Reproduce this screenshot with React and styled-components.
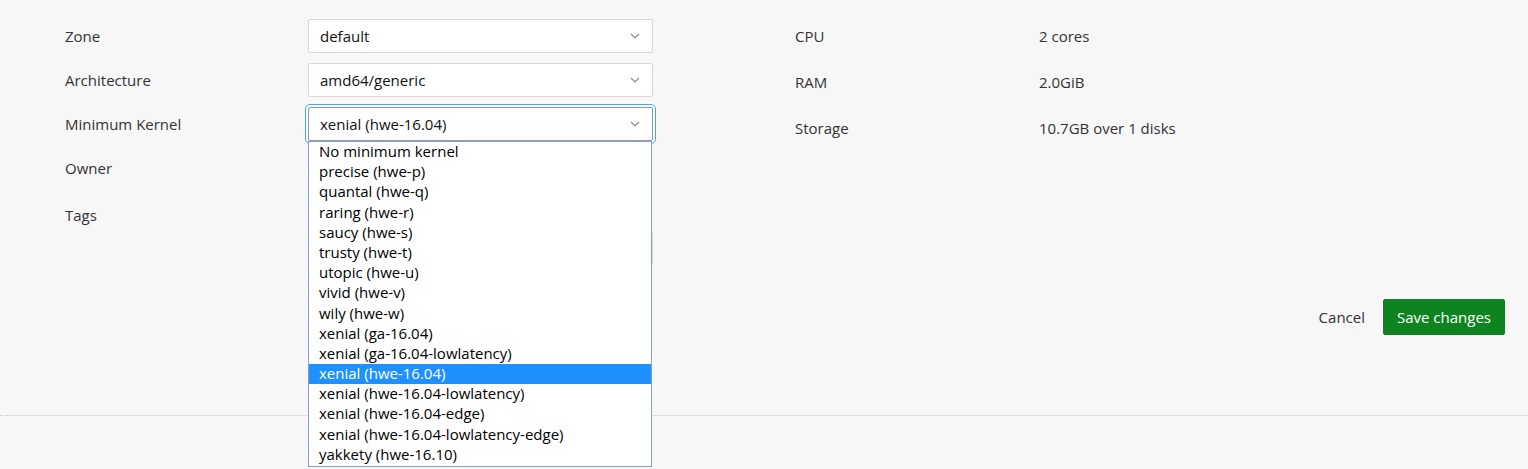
import React from "react";
import styled, { createGlobalStyle } from "styled-components";

const GlobalStyle = createGlobalStyle`
  body {
    margin: 0;
    background: #f7f7f7;
    font-family: "Open Sans", "Noto Sans", sans-serif;
    color: #111;
  }
`;

const KERNELS = [
  "No minimum kernel",
  "precise (hwe-p)",
  "quantal (hwe-q)",
  "raring (hwe-r)",
  "saucy (hwe-s)",
  "trusty (hwe-t)",
  "utopic (hwe-u)",
  "vivid (hwe-v)",
  "wily (hwe-w)",
  "xenial (ga-16.04)",
  "xenial (ga-16.04-lowlatency)",
  "xenial (hwe-16.04)",
  "xenial (hwe-16.04-lowlatency)",
  "xenial (hwe-16.04-edge)",
  "xenial (hwe-16.04-lowlatency-edge)",
  "yakkety (hwe-16.10)",
];

const SELECTED = "xenial (hwe-16.04)";

const Chevron = () => (
  <ChevronIcon width="10" height="6" viewBox="0 0 10 6">
    <path d="M1 1l4 4 4-4" fill="none" stroke="#888" strokeWidth="1.2" />
  </ChevronIcon>
);

const Select = ({ value, focused, children }) => (
  <SelectWrap>
    <SelectBox $focused={focused}>
      {value}
      <Chevron />
    </SelectBox>
    {children}
  </SelectWrap>
);

const App = () => (
  <>
    <GlobalStyle />
    <Page>
      <Form>
        <FieldGrid>
          <Label>Zone</Label>
          <Select value="default" />
          <Label>Architecture</Label>
          <Select value="amd64/generic" />
          <Label>Minimum Kernel</Label>
          <Select value={SELECTED} focused>
            <Dropdown>
              {KERNELS.map((k) => (
                <Option key={k} $active={k === SELECTED}>
                  {k}
                </Option>
              ))}
            </Dropdown>
          </Select>
          <Label>Owner</Label>
          <OwnerField />
          <Label $tall>Tags</Label>
          <TagsField>
            <TagList />
            <TagInput />
          </TagsField>
        </FieldGrid>

        <InfoGrid>
          <Label>CPU</Label>
          <Value>2 cores</Value>
          <Label>RAM</Label>
          <Value>2.0GiB</Value>
          <Label>Storage</Label>
          <Value>10.7GB over 1 disks</Value>
        </InfoGrid>
      </Form>

      <Actions>
        <CancelButton>Cancel</CancelButton>
        <SaveButton>Save changes</SaveButton>
      </Actions>

      <Divider />
    </Page>
  </>
);

const Page = styled.div`
  padding: 19px 23px 0 65px;
  height: 469px;
  box-sizing: border-box;
`;

const Form = styled.div`
  display: flex;
  gap: 142px;
`;

const FieldGrid = styled.div`
  display: grid;
  grid-template-columns: 243px 345px;
  grid-auto-rows: 34px;
  row-gap: 10px;
  align-items: center;
`;

const InfoGrid = styled.div`
  display: grid;
  grid-template-columns: 244px auto;
  grid-auto-rows: 36px;
  row-gap: 10px;
  align-items: center;
  margin-top: -1px;
`;

const Label = styled.div`
  font-size: 15px;
  color: #333;
  align-self: ${(p) => (p.$tall ? "start" : "center")};
  padding-top: ${(p) => (p.$tall ? "10px" : "0")};
`;

const Value = styled(Label)`
  color: #333;
`;

const SelectWrap = styled.div`
  position: relative;
  height: 34px;
`;

const SelectBox = styled.div`
  box-sizing: border-box;
  height: 34px;
  padding: 0 12px 0 11px;
  display: flex;
  align-items: center;
  justify-content: space-between;
  background: #fff;
  border: 1px solid ${(p) => (p.$focused ? "#999" : "#d8d8d8")};
  border-radius: 2px;
  font-size: 15px;
  color: #111;
  outline: ${(p) => (p.$focused ? "1px solid #3daee9" : "none")};
  outline-offset: 2px;
`;

const ChevronIcon = styled.svg`
  display: block;
`;

const OwnerField = styled.div`
  height: 34px;
`;

const TagsField = styled.div`
  align-self: start;
  display: flex;
  flex-direction: column;
  padding-top: 2px;
`;

const TagList = styled.div`
  height: 35px;
`;

const TagInput = styled.div`
  box-sizing: border-box;
  height: 34px;
  background: #fff;
  border: 1px solid #d8d8d8;
  border-radius: 2px;
`;

const Dropdown = styled.ul`
  position: absolute;
  top: 34px;
  left: 0;
  width: 344px;
  box-sizing: border-box;
  margin: 0;
  padding: 0 0 1px;
  list-style: none;
  background: #fff;
  border: 1px solid #7f9fd6;
  z-index: 10;
`;

const Option = styled.li`
  height: 20.2px;
  line-height: 19px;
  padding: 0 10px;
  font-size: 15px;
  color: ${(p) => (p.$active ? "#fff" : "#000")};
  background: ${(p) => (p.$active ? "#1e90ff" : "transparent")};
  white-space: nowrap;
`;

const Actions = styled.div`
  display: flex;
  justify-content: flex-end;
  align-items: center;
  gap: 18px;
  margin-top: 70px;
`;

const CancelButton = styled.button`
  background: none;
  border: none;
  padding: 0;
  font-family: inherit;
  font-size: 15px;
  color: #333;
`;

const SaveButton = styled.button`
  height: 36px;
  padding: 0 13px;
  background: #0e8420;
  border: 1px solid #0e8420;
  border-radius: 2px;
  color: #fff;
  font-family: inherit;
  font-size: 15px;
`;

const Divider = styled.hr`
  margin: 80px -23px 0 -65px;
  border: none;
  border-top: 1px dotted #c8c8c8;
`;

export default App;
